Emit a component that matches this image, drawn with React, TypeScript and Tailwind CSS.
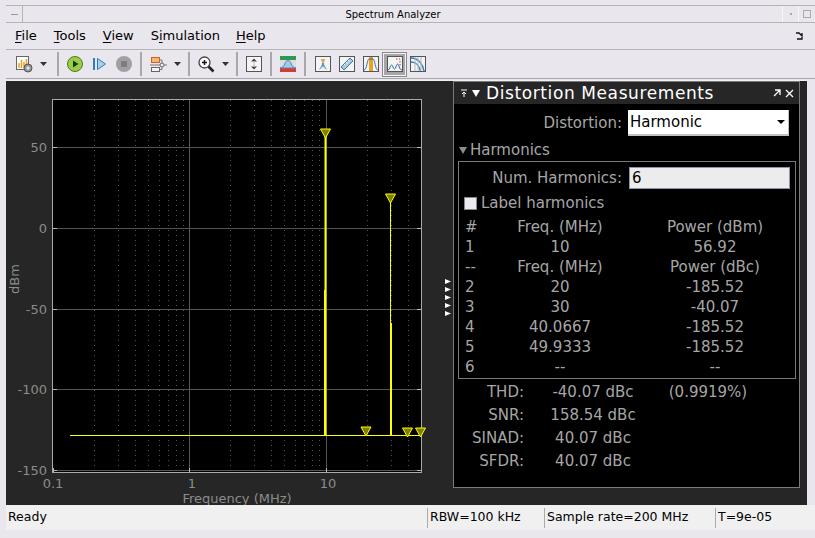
const decades = [0.1, 1, 10];
const minors = [0.2,0.3,0.4,0.5,0.6,0.7,0.8,0.9,2,3,4,5,6,7,8,9,20,30,40];
const fx = (f: number) => 52.5 + 136.5 * (Math.log10(f) + 1);
const ys: [string, number][] = [["50",147],["0",228],["-50",309],["-100",389],["-150",470]];
const markers: [number, number][] = [[325.5,133],[390.5,198],[366,431],[407.5,432],[420.5,432]];

function Chart() {
  return (
    <svg viewBox="7 81 446 424" className="block h-full w-full" style={{ fontFamily: '"DejaVu Sans", sans-serif' }}>
      <rect x="52.5" y="99.5" width="369" height="373" fill="#000" stroke="#aaa" />
      {minors.map((f) => (
        <line key={f} x1={Math.round(fx(f)) + 0.5} x2={Math.round(fx(f)) + 0.5} y1="100" y2="472" stroke="#555" strokeDasharray="1 4" />
      ))}
      {decades.slice(1).map((f) => (
        <line key={f} x1={Math.round(fx(f)) + 0.5} x2={Math.round(fx(f)) + 0.5} y1="100" y2="472" stroke="#555" />
      ))}
      {ys.map(([l, y]) => (
        <g key={l}>
          <line x1="53" x2="421" y1={y + 0.5} y2={y + 0.5} stroke="#555" />
          <line x1="53" x2="57" y1={y + 0.5} y2={y + 0.5} stroke="#bbb" />
          <line x1="417" x2="421" y1={y + 0.5} y2={y + 0.5} stroke="#bbb" />
          <text x="47" y={y + 5} textAnchor="end" fontSize="13" fill="#8c8c8c">{l}</text>
        </g>
      ))}
      {decades.map((f) => (
        <line key={`t${f}`} x1={Math.round(fx(f)) + 0.5} x2={Math.round(fx(f)) + 0.5} y1="468" y2="472" stroke="#bbb" />
      ))}
      <text x="53" y="488" textAnchor="middle" fontSize="13" fill="#8c8c8c">0.1</text>
      <text x="192" y="488" textAnchor="middle" fontSize="13" fill="#8c8c8c">1</text>
      <text x="328" y="488" textAnchor="middle" fontSize="13" fill="#8c8c8c">10</text>
      <text x="237" y="503" textAnchor="middle" fontSize="13" fill="#8c8c8c">Frequency (MHz)</text>
      <text transform="translate(19 279) rotate(-90)" textAnchor="middle" fontSize="13" fill="#8c8c8c">dBm</text>
      <path d="M70 435.5H421" stroke="#ffff00" strokeWidth="1" />
      <path d="M325.5 135V436" stroke="#ffff00" strokeWidth="2" />
      <path d="M324.5 290V436" stroke="#ffff00" strokeWidth="1" />
      <path d="M390.5 200V436" stroke="#ffff00" strokeWidth="1" />
      <path d="M391 323V436" stroke="#ffff00" strokeWidth="2" />
      {markers.map(([x, y]) => (
        <path key={x} d={`M${x - 5} ${y - 4}H${x + 5}L${x} ${y + 5}Z`} fill="#808000" stroke="#ffff00" strokeWidth="1" />
      ))}
    </svg>
  );
}

function Sep() {
  return <div className="mx-[3px] h-[24px] w-[2px] shrink-0 bg-[#a8a8a8]" />;
}
function Dd() {
  return <svg width="7" height="4" viewBox="0 0 7 4" className="shrink-0"><path d="M0 0H7L3.5 4Z" fill="#333" /></svg>;
}
function Frame({ children }: { children: React.ReactNode }) {
  return (
    <svg width="16" height="16" viewBox="0 0 16 16" className="shrink-0">
      <rect x="0.5" y="0.5" width="15" height="15" fill="#f4f4f4" stroke="#555" />
      {children}
    </svg>
  );
}

function Toolbar() {
  return (
    <div className="flex h-[29px] items-center border-b border-[#a8a8a8] pl-[10px]">
      <svg width="17" height="17" viewBox="0 0 17 17" className="shrink-0">
        <rect x="0.5" y="0.5" width="12" height="13" fill="#fff" stroke="#666" />
        <path d="M3 12V7M5.5 12V4M8 12V6M10.5 12V3" stroke="#e8a020" strokeWidth="1.5" />
        <circle cx="12" cy="12" r="4" fill="#999" stroke="#555" />
        <circle cx="12" cy="12" r="1.5" fill="#eee" />
      </svg>
      <div className="ml-[7px] mr-[7px] flex w-[7px] justify-center"><Dd /></div>
      <Sep />
      <svg width="16" height="16" viewBox="0 0 16 16" className="ml-[5px] shrink-0">
        <circle cx="8" cy="8" r="7.5" fill="#9ccc4c" stroke="#4a7a20" />
        <path d="M6 4.5L11.5 8L6 11.5Z" fill="#1e3a10" />
      </svg>
      <svg width="13" height="14" viewBox="0 0 13 14" className="ml-[10px] shrink-0">
        <path d="M1 1V13" stroke="#2f7db8" strokeWidth="2" />
        <path d="M4.5 1.5L12.5 7L4.5 12.5Z" fill="#a8d0ee" stroke="#2f7db8" />
      </svg>
      <svg width="16" height="16" viewBox="0 0 16 16" className="ml-[10px] shrink-0">
        <circle cx="8" cy="8" r="8" fill="#a0a0a0" />
        <rect x="5" y="5" width="6" height="6" fill="#7e7e7e" />
      </svg>
      <div className="ml-[5px]"><Sep /></div>
      <svg width="17" height="17" viewBox="0 0 17 17" className="ml-[5px] shrink-0">
        <rect x="1.5" y="1.5" width="8" height="5" fill="#f2b870" stroke="#d0602a" />
        <rect x="1.5" y="11.5" width="8" height="4" fill="#f4f4f4" stroke="#666" />
        <circle cx="12" cy="9" r="2" fill="#eee" stroke="#666" />
        <path d="M0 9H10M14 9H17M9.5 13.5H12V11M9.5 4H12V7" stroke="#777" fill="none" />
      </svg>
      <div className="ml-[7px] mr-[4px] flex w-[7px] justify-center"><Dd /></div>
      <Sep />
      <svg width="17" height="17" viewBox="0 0 17 17" className="ml-[5px] shrink-0">
        <circle cx="6.5" cy="6.5" r="5.5" fill="#fff" stroke="#444" strokeWidth="1.3" />
        <path d="M4 6.5H9M6.5 4V9" stroke="#111" strokeWidth="1.4" />
        <path d="M10.5 10.5L15.5 15.5" stroke="#222" strokeWidth="2.6" />
      </svg>
      <div className="ml-[7px] mr-[4px] flex w-[7px] justify-center"><Dd /></div>
      <Sep />
      <div className="ml-[5px]">
        <Frame>
          <path d="M5 5.5L8 2.5L11 5.5ZM5 10.5L8 13.5L11 10.5Z" fill="#444" />
          <path d="M8 5V11" stroke="#bbb" />
        </Frame>
      </div>
      <div className="ml-[5px]"><Sep /></div>
      <svg width="16" height="16" viewBox="0 0 16 16" className="ml-[5px] shrink-0">
        <rect width="16" height="16" fill="#ddd" />
        <rect width="16" height="4" fill="#2e9a50" />
        <rect y="12" width="16" height="4" fill="#d83a30" />
        <path d="M0 12C5 12 5 4 8 4C11 4 11 12 16 12Z" fill="#a8c8e0" stroke="#4a88b8" />
      </svg>
      <div className="ml-[5px]"><Sep /></div>
      <div className="ml-[6px]">
        <Frame>
          <path d="M5 3H11L9 7L11.5 13H4.5L7 7Z" fill="#d8e4ee" />
          <path d="M6 3H10L8.5 7H7.5Z" fill="#e0a840" />
          <path d="M8 7V11M4.5 13C7 11 7.5 9 8 7C8.5 9 9 11 11.5 13" stroke="#4a88b8" fill="none" />
        </Frame>
      </div>
      <div className="ml-[8px]">
        <Frame>
          <path d="M2 11L11 2L14 5L5 14Z" fill="#a8c8e0" stroke="#4a7898" />
          <path d="M5 8L6.5 9.5M7 6L8.5 7.5M9 4L10.5 5.5" stroke="#fff" />
        </Frame>
      </div>
      <div className="ml-[8px]">
        <Frame>
          <rect x="6" y="1" width="4" height="14" fill="#f0a020" />
          <path d="M1 14C4 14 4 3 6 3H10C12 3 12 14 15 14" stroke="#2f6ea8" fill="none" />
        </Frame>
      </div>
      <div className="ml-[4px] flex h-[23px] w-[23px] items-center justify-center border border-[#f4f4f4] bg-[#a6a6a6] outline outline-1 outline-[#8a8a8a]">
        <Frame>
          <path d="M1 14C3 14 3 9 4.5 9C6 9 6 13 7.5 13C9 13 9 8 10.5 8C12 8 12 14 15 14" stroke="#2f6ea8" fill="none" />
          <path d="M9 3H13V10" stroke="#c84030" strokeDasharray="1.5 1.5" fill="none" />
        </Frame>
      </div>
      <div className="ml-[4px]">
        <Frame>
          <path d="M1 2C8 2 13 8 14 15M1 6C6 6 9.5 10 10.5 15" stroke="#2f7db8" strokeWidth="1.4" fill="none" />
          <path d="M5 1V15M8 1V15M11 1V15" stroke="#bbb" fill="none" />
        </Frame>
      </div>
    </div>
  );
}

const rows: [string, string, string, boolean?][] = [
  ["#","Freq. (MHz)","Power (dBm)"],
  ["1","10","56.92"],
  ["--","Freq. (MHz)","Power (dBc)"],
  ["2","20","-185.52"],
  ["3","30","-40.07"],
  ["4","40.0667","-185.52"],
  ["5","49.9333","-185.52"],
  ["6","--","--"],
];
const stats: [string, string, string][] = [
  ["THD:","-40.07 dBc","(0.9919%)"],
  ["SNR:","158.54 dBc",""],
  ["SINAD:","40.07 dBc",""],
  ["SFDR:","40.07 dBc",""],
];

function Panel() {
  return (
    <div className="flex h-[407px] w-[347px] shrink-0 flex-col border border-[#7a7a7a] bg-black text-[15px] text-[#a6a6a6]">
      <div className="flex h-[22px] shrink-0 items-center bg-[#262626] pl-[6px] pr-[5px] text-white">
        <svg width="9" height="9" viewBox="0 0 9 9" className="shrink-0"><path d="M1 1H7M4 8V4M2 5L4 3L6 5" stroke="#fff" fill="none" /></svg>
        <svg width="8" height="7" viewBox="0 0 8 7" className="ml-[3px] shrink-0"><path d="M0 0H8L4 7Z" fill="#fff" /></svg>
        <span className="ml-[6px] text-[17px] leading-[22px] tracking-[0.6px]">Distortion Measurements</span>
        <svg width="8" height="8" viewBox="0 0 8 8" className="ml-auto shrink-0"><path d="M2 1H7V6M7 1L1 7" stroke="#fff" fill="none" strokeWidth="1.3" /></svg>
        <svg width="9" height="9" viewBox="0 0 9 9" className="ml-[4px] shrink-0"><path d="M1 1L8 8M8 1L1 8" stroke="#fff" strokeWidth="1.3" /></svg>
      </div>
      <div className="mt-[6px] flex h-[26px] items-center">
        <span className="w-[168px] text-right">Distortion:</span>
        <div className="ml-[6px] flex h-[26px] w-[161px] items-center justify-between border-b-2 border-r border-[#c0c0c8] bg-white pl-[2px] pr-[3px] text-black">
          Harmonic
          <svg width="8" height="4" viewBox="0 0 8 4"><path d="M0 0H8L4 4Z" fill="#000" /></svg>
        </div>
      </div>
      <div className="mt-[4px] flex h-[21px] items-center pl-[5px]">
        <svg width="8" height="7" viewBox="0 0 8 7"><path d="M0 0H8L4 7Z" fill="#8c8c8c" /></svg>
        <span className="ml-[3px]">Harmonics</span>
      </div>
      <div className="ml-[4px] h-[218px] w-[338px] border border-[#7a7a7a] pl-[5px]">
        <div className="mt-[5px] flex h-[22px] items-center">
          <span className="w-[158px] text-right">Num. Harmonics:</span>
          <div className="ml-[7px] flex h-[22px] w-[161px] items-center border border-[#8c92b0] bg-[#ececec] pl-[2px] text-black">6</div>
        </div>
        <div className="mt-[6px] flex h-[16px] items-center">
          <div className="h-[13px] w-[13px] border border-[#888] bg-[#eceaf0]" />
          <span className="ml-[4px]">Label harmonics</span>
        </div>
        <div className="mt-[6px]">
          {rows.map(([a, b, c], i) => (
            <div key={i} className="grid h-[20px] grid-cols-[36px_120px_190px] items-center leading-[20px]">
              <span className="pl-[1px]">{a}</span>
              <span className="text-center">{b}</span>
              <span className="text-center">{c}</span>
            </div>
          ))}
        </div>
      </div>
      <div className="mt-[2px]">
        {stats.map(([a, b, c]) => (
          <div key={a} className="grid h-[23px] grid-cols-[70px_26px_86px_28px_88px] items-center">
            <span className="text-right">{a}</span>
            <span />
            <span className="whitespace-nowrap text-center">{b}</span>
            <span />
            <span className="whitespace-nowrap text-center">{c}</span>
          </div>
        ))}
      </div>
    </div>
  );
}

function Handles() {
  return (
    <div className="absolute left-[439px] top-[198px] flex flex-col gap-[3px]">
      {[0,1,2,3,4].map((i) => (
        <svg key={i} width="6" height="5" viewBox="0 0 6 5" className="block"><path d="M0 0L6 2.5L0 5Z" fill="#fff" /></svg>
      ))}
    </div>
  );
}

export default function App() {
  const u = "underline underline-offset-2";
  return (
    <div className="flex h-[538px] w-[815px] flex-col overflow-hidden bg-[#e9e7ed] pl-[6px] pt-[5px] text-[13px] text-black" style={{ fontFamily: '"DejaVu Sans", sans-serif' }}>
      <div className="flex h-[18px] shrink-0 items-center border-y border-[#b4b4b4]">
        <div className="flex h-full w-[17px] items-center justify-center border-r border-[#b4b4b4]"><div className="h-[1px] w-[7px] bg-[#999]" /></div>
        <span className="flex-1 pr-[19px] text-center text-[10px]">Spectrum Analyzer</span>
        <div className="flex h-full w-[17px] items-center justify-center border-x border-[#f8f8f8]"><div className="h-[2px] w-[2px] bg-[#aaa]" /></div>
        <div className="ml-[4px] mr-[4px] h-[8px] w-[8px] border border-[#aaa]" />
      </div>
      <div className="flex h-[27px] shrink-0 items-center border-b border-[#b4b4b4] pl-[9px] pr-[12px]">
        <span className="mr-[17px]"><u className={u}>F</u>ile</span>
        <span className="mr-[17px]"><u className={u}>T</u>ools</span>
        <span className="mr-[17px]"><u className={u}>V</u>iew</span>
        <span className="mr-[16px]">S<u className={u}>i</u>mulation</span>
        <span><u className={u}>H</u>elp</span>
        <svg width="8" height="8" viewBox="0 0 8 8" className="ml-auto"><path d="M1 1H4L7 4V1V7H2" stroke="#111" fill="none" strokeWidth="1.3" /></svg>
      </div>
      <Toolbar />
      <div className="relative mt-[1px] flex h-[425px] w-[801px] shrink-0 items-start border-t border-[#f0f0f0] bg-[#262626] pl-[1px]">
        <div className="h-[424px] w-[446px] shrink-0"><Chart /></div>
        <Panel />
        <Handles />
      </div>
      <div className="flex h-[25px] shrink-0 items-center bg-[#f0f0f0] pl-[2px] text-[12.5px]">
        <span className="w-[419px]">Ready</span>
        <div className="flex h-[20px] w-[114px] items-center border-l border-[#aaa] pl-[2px]">RBW=100 kHz</div>
        <div className="ml-[3px] flex h-[20px] w-[168px] items-center border-l border-[#aaa] pl-[2px]">Sample rate=200 MHz</div>
        <div className="ml-[3px] flex h-[20px] w-[91px] items-center border-l border-[#aaa] pl-[2px]">T=9e-05</div>
      </div>
    </div>
  );
}
